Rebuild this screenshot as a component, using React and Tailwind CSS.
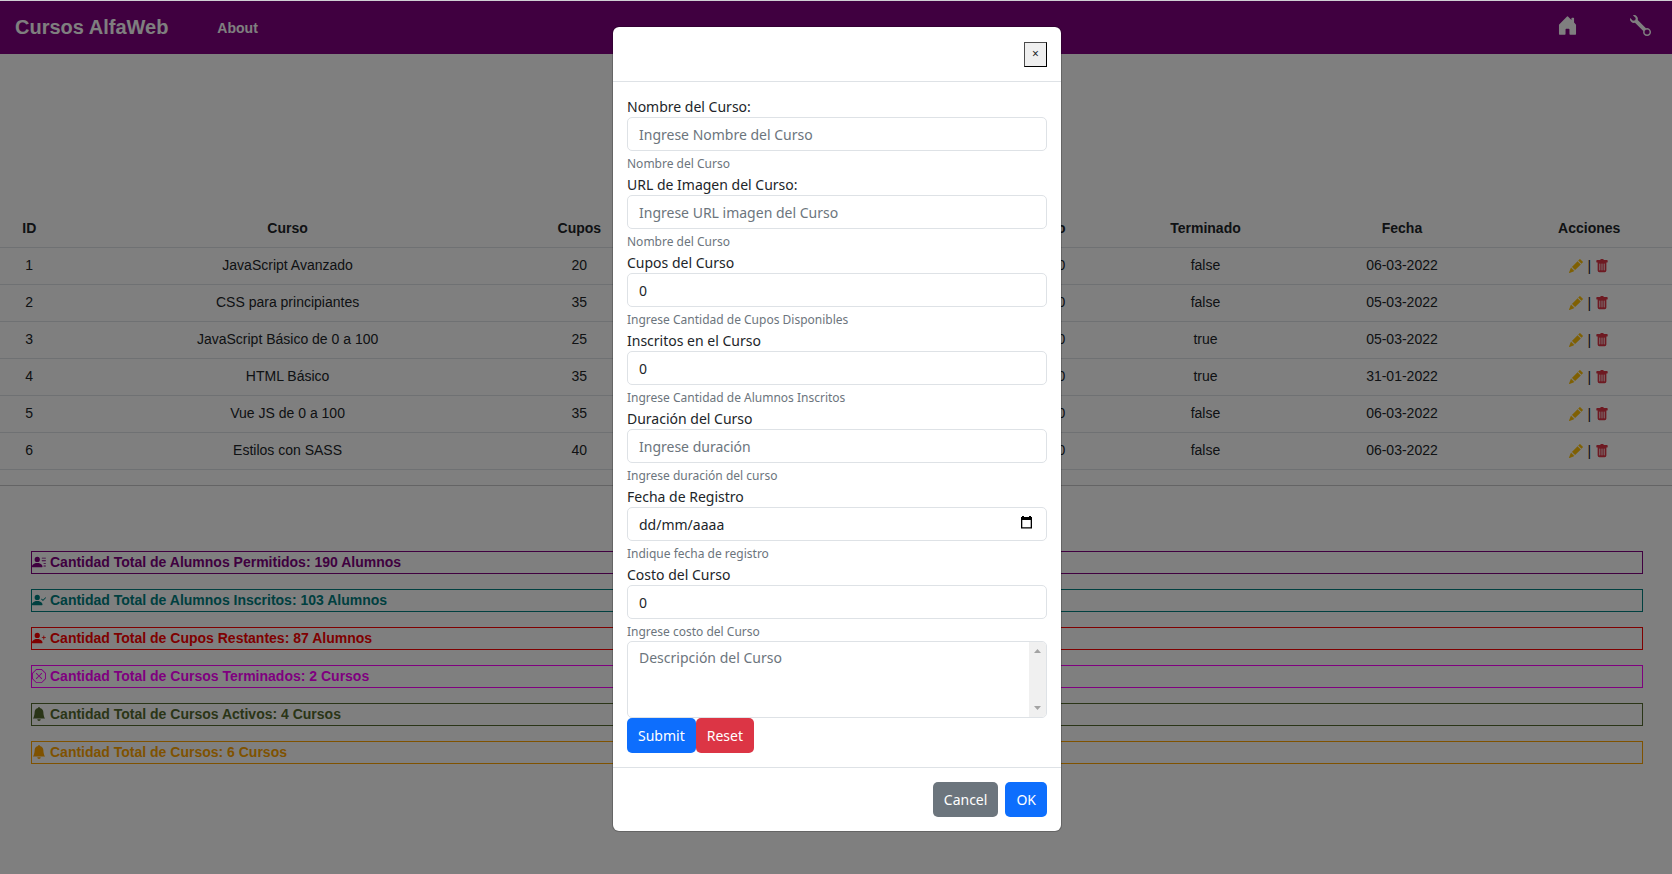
import { useState } from "react";
import {
  BsBellFill,
  BsHouseDoorFill,
  BsPencilFill,
  BsPersonCheckFill,
  BsPersonLinesFill,
  BsPersonPlusFill,
  BsTrashFill,
  BsWrench,
  BsXOctagon,
} from "react-icons/bs";

const courses = [
  { id: 1, name: "JavaScript Avanzado", seats: 20, cost: 30000, done: false, date: "06-03-2022" },
  { id: 2, name: "CSS para principiantes", seats: 35, cost: 20000, done: false, date: "05-03-2022" },
  { id: 3, name: "JavaScript Básico de 0 a 100", seats: 25, cost: 25000, done: true, date: "05-03-2022" },
  { id: 4, name: "HTML Básico", seats: 35, cost: 15000, done: true, date: "31-01-2022" },
  { id: 5, name: "Vue JS de 0 a 100", seats: 35, cost: 35000, done: false, date: "06-03-2022" },
  { id: 6, name: "Estilos con SASS", seats: 40, cost: 10000, done: false, date: "06-03-2022" },
];

const totals = [
  { Icon: BsPersonLinesFill, text: "Cantidad Total de Alumnos Permitidos: 190 Alumnos", tone: "border-[#800080] text-[#800080]" },
  { Icon: BsPersonCheckFill, text: "Cantidad Total de Alumnos Inscritos: 103 Alumnos", tone: "border-[#008080] text-[#008080]" },
  { Icon: BsPersonPlusFill, text: "Cantidad Total de Cupos Restantes: 87 Alumnos", tone: "border-[#ff0000] text-[#ff0000]" },
  { Icon: BsXOctagon, text: "Cantidad Total de Cursos Terminados: 2 Cursos", tone: "border-[#ff00ff] text-[#ff00ff]" },
  { Icon: BsBellFill, text: "Cantidad Total de Cursos Activos: 4 Cursos", tone: "border-[#556b2f] text-[#556b2f]" },
  { Icon: BsBellFill, text: "Cantidad Total de Cursos: 6 Cursos", tone: "border-[#ffa500] text-[#ffa500]" },
];

const fields = [
  { id: "nombre", label: "Nombre del Curso:", placeholder: "Ingrese Nombre del Curso", hint: "Nombre del Curso" },
  { id: "imagen", label: "URL de Imagen del Curso:", placeholder: "Ingrese URL imagen del Curso", hint: "Nombre del Curso" },
  { id: "cupos", label: "Cupos del Curso", value: "0", hint: "Ingrese Cantidad de Cupos Disponibles" },
  { id: "inscritos", label: "Inscritos en el Curso", value: "0", hint: "Ingrese Cantidad de Alumnos Inscritos" },
  { id: "duracion", label: "Duración del Curso", placeholder: "Ingrese duración", hint: "Ingrese duración del curso" },
  { id: "fecha", label: "Fecha de Registro", placeholder: "dd/mm/aaaa", hint: "Indique fecha de registro", date: true },
  { id: "costo", label: "Costo del Curso", value: "0", hint: "Ingrese costo del Curso" },
];

function Navbar() {
  return (
    <nav className="flex h-[53px] items-center bg-[#800080] pl-[15px] pr-[21px] font-bold text-white">
      <a href="#" className="pb-0.5 text-[20px] leading-[30px]">Cursos AlfaWeb</a>
      <a href="#about" className="ml-[49px] text-[14px] leading-[22px]">About</a>
      <div className="ml-auto flex items-center gap-[52px] pb-1">
        <a href="#home" aria-label="Inicio"><BsHouseDoorFill className="size-[21px]" /></a>
        <a href="#admin" aria-label="Administración"><BsWrench className="size-[21px]" /></a>
      </div>
    </nav>
  );
}

function CourseTable() {
  return (
    <table className="w-full table-fixed border-collapse text-center text-[14px] leading-[22px] text-[#212529]">
      <colgroup>
        <col className="w-[3.5%]" />
        <col className="w-[27.4%]" />
        <col className="w-[7.5%]" />
        <col className="w-[20.1%]" />
        <col className="w-[8.1%]" />
        <col className="w-[11%]" />
        <col className="w-[12.5%]" />
        <col className="w-[9.9%]" />
      </colgroup>
      <thead>
        <tr className="h-[37px] border-b border-[#dee2e6]">
          <th>ID</th>
          <th>Curso</th>
          <th>Cupos</th>
          <td />
          <th>Costo</th>
          <th>Terminado</th>
          <th>Fecha</th>
          <th>Acciones</th>
        </tr>
      </thead>
      <tbody>
        {courses.map((c) => (
          <tr key={c.id} className="h-[37px] border-b border-[#dee2e6]">
            <td className="pb-0.5">{c.id}</td>
            <td className="pb-0.5">{c.name}</td>
            <td className="pb-0.5">{c.seats}</td>
            <td />
            <td className="pb-0.5">{c.cost}</td>
            <td className="pb-0.5">{String(c.done)}</td>
            <td className="pb-0.5">{c.date}</td>
            <td>
              <div className="flex items-center justify-center gap-1">
                <button type="button" aria-label="Editar"><BsPencilFill className="size-[14px] text-[#ffc107]" /></button>
                <span>|</span>
                <button type="button" aria-label="Eliminar"><BsTrashFill className="size-[14px] text-[#dc3545]" /></button>
              </div>
            </td>
          </tr>
        ))}
      </tbody>
    </table>
  );
}

function Totals() {
  return (
    <ul className="ml-[31px] mr-[29px] mt-[65px] flex flex-col gap-[15px]">
      {totals.map(({ Icon, text, tone }) => (
        <li key={text} className={`flex h-[23px] items-center gap-1 border text-[14px] font-bold leading-[21px] ${tone}`}>
          <Icon className="size-[14px] shrink-0" />
          {text}
        </li>
      ))}
    </ul>
  );
}

function Field({ field }) {
  const [value, setValue] = useState(field.value ?? "");
  const box =
    "h-[34px] w-full rounded-[5px] border border-[#dee2e6] bg-white px-[11px] pt-px text-[14px] leading-[22px] text-[#212529] outline-none";
  return (
    <div>
      <label htmlFor={field.id} className="block h-[22px] text-[14px] leading-[24px]">{field.label}</label>
      <div className="relative">
        <input
          id={field.id}
          type="text"
          value={value}
          onChange={(e) => setValue(e.target.value)}
          placeholder={field.placeholder}
          className={`${box} ${field.date ? "placeholder:text-[#212529]" : "placeholder:text-[#6c757d]"}`}
        />
        {field.date && (
          <button type="button" aria-label="Abrir calendario" className="absolute right-[14px] top-[9px]">
            <svg viewBox="0 0 13 13" className="size-[13px]" fill="#000">
              <path d="M2 0h2v1h5V0h2v1h1v11.500H1V1h1zM2.300 4v7.200h8.400V4z" fillRule="evenodd" />
            </svg>
          </button>
        )}
      </div>
      <small className="mt-[3px] block text-[12px] leading-[19px] text-[#6c757d]">{field.hint}</small>
    </div>
  );
}

function CourseModal() {
  const btn = "h-[35px] rounded-[5px] px-[11px] text-[14px] leading-[22px] text-white";
  return (
    <div
      role="dialog"
      aria-modal="true"
      aria-label="Curso"
      className="w-full max-w-[450px] rounded-[7px] border border-black/20 bg-white bg-clip-padding font-['Noto_Sans',sans-serif] text-[14px] text-[#212529]"
    >
      <header className="flex h-[55px] items-center justify-end border-b border-[#dee2e6] px-[14px]">
        <button
          type="button"
          aria-label="Cerrar"
          className="flex h-[25px] w-[23px] items-center justify-center border border-b-black border-l-[#4c4c4c] border-r-black border-t-[#4c4c4c] bg-[#efefef] text-[12px] leading-[20px]"
        >
          ×
        </button>
      </header>
      <form className="px-[14px] pb-[14px] pt-[13px]" onSubmit={(e) => e.preventDefault()}>
        {fields.map((f) => (
          <Field key={f.id} field={f} />
        ))}
        <div className="flex h-[77px] overflow-hidden rounded-[5px] border border-[#dee2e6]">
          <textarea
            aria-label="Descripción del Curso"
            placeholder="Descripción del Curso"
            className="min-w-0 flex-1 resize-none overflow-hidden px-[11px] py-[5px] text-[14px] leading-[22px] outline-none placeholder:text-[#6c757d]"
          />
          <div className="flex w-[17px] flex-col items-center justify-between bg-[#f0f0f0] py-[7px]">
            <svg viewBox="0 0 7 4" className="h-1 w-[7px]" fill="#a3a3a3"><path d="M0 4 3.500 0 7 4z" /></svg>
            <svg viewBox="0 0 7 4" className="h-1 w-[7px]" fill="#a3a3a3"><path d="M0 0h7L3.500 4z" /></svg>
          </div>
        </div>
        <div className="flex">
          <button type="submit" className={`${btn} bg-[#0d6efd]`}>Submit</button>
          <button type="reset" className={`${btn} bg-[#dc3545]`}>Reset</button>
        </div>
      </form>
      <footer className="flex justify-end gap-[7px] border-t border-[#dee2e6] p-[14px]">
        <button type="button" className={`${btn} bg-[#6c757d]`}>Cancel</button>
        <button type="button" className={`${btn} bg-[#0d6efd]`}>OK</button>
      </footer>
    </div>
  );
}

export default function App() {
  return (
    <div className="border-t border-[#d0cfd4] font-['Liberation_Sans',Arial,sans-serif]">
      <div className="relative min-h-[calc(100vh-1px)] bg-white">
        <Navbar />
        <main className="pt-[156px]">
          <CourseTable />
          <hr className="mt-[15px] border-t border-[#c8c9ca]" />
          <Totals />
        </main>
        <div className="absolute inset-0 flex items-start justify-center bg-black/50 pl-0.5 pt-[25px]">
          <CourseModal />
        </div>
      </div>
    </div>
  );
}
